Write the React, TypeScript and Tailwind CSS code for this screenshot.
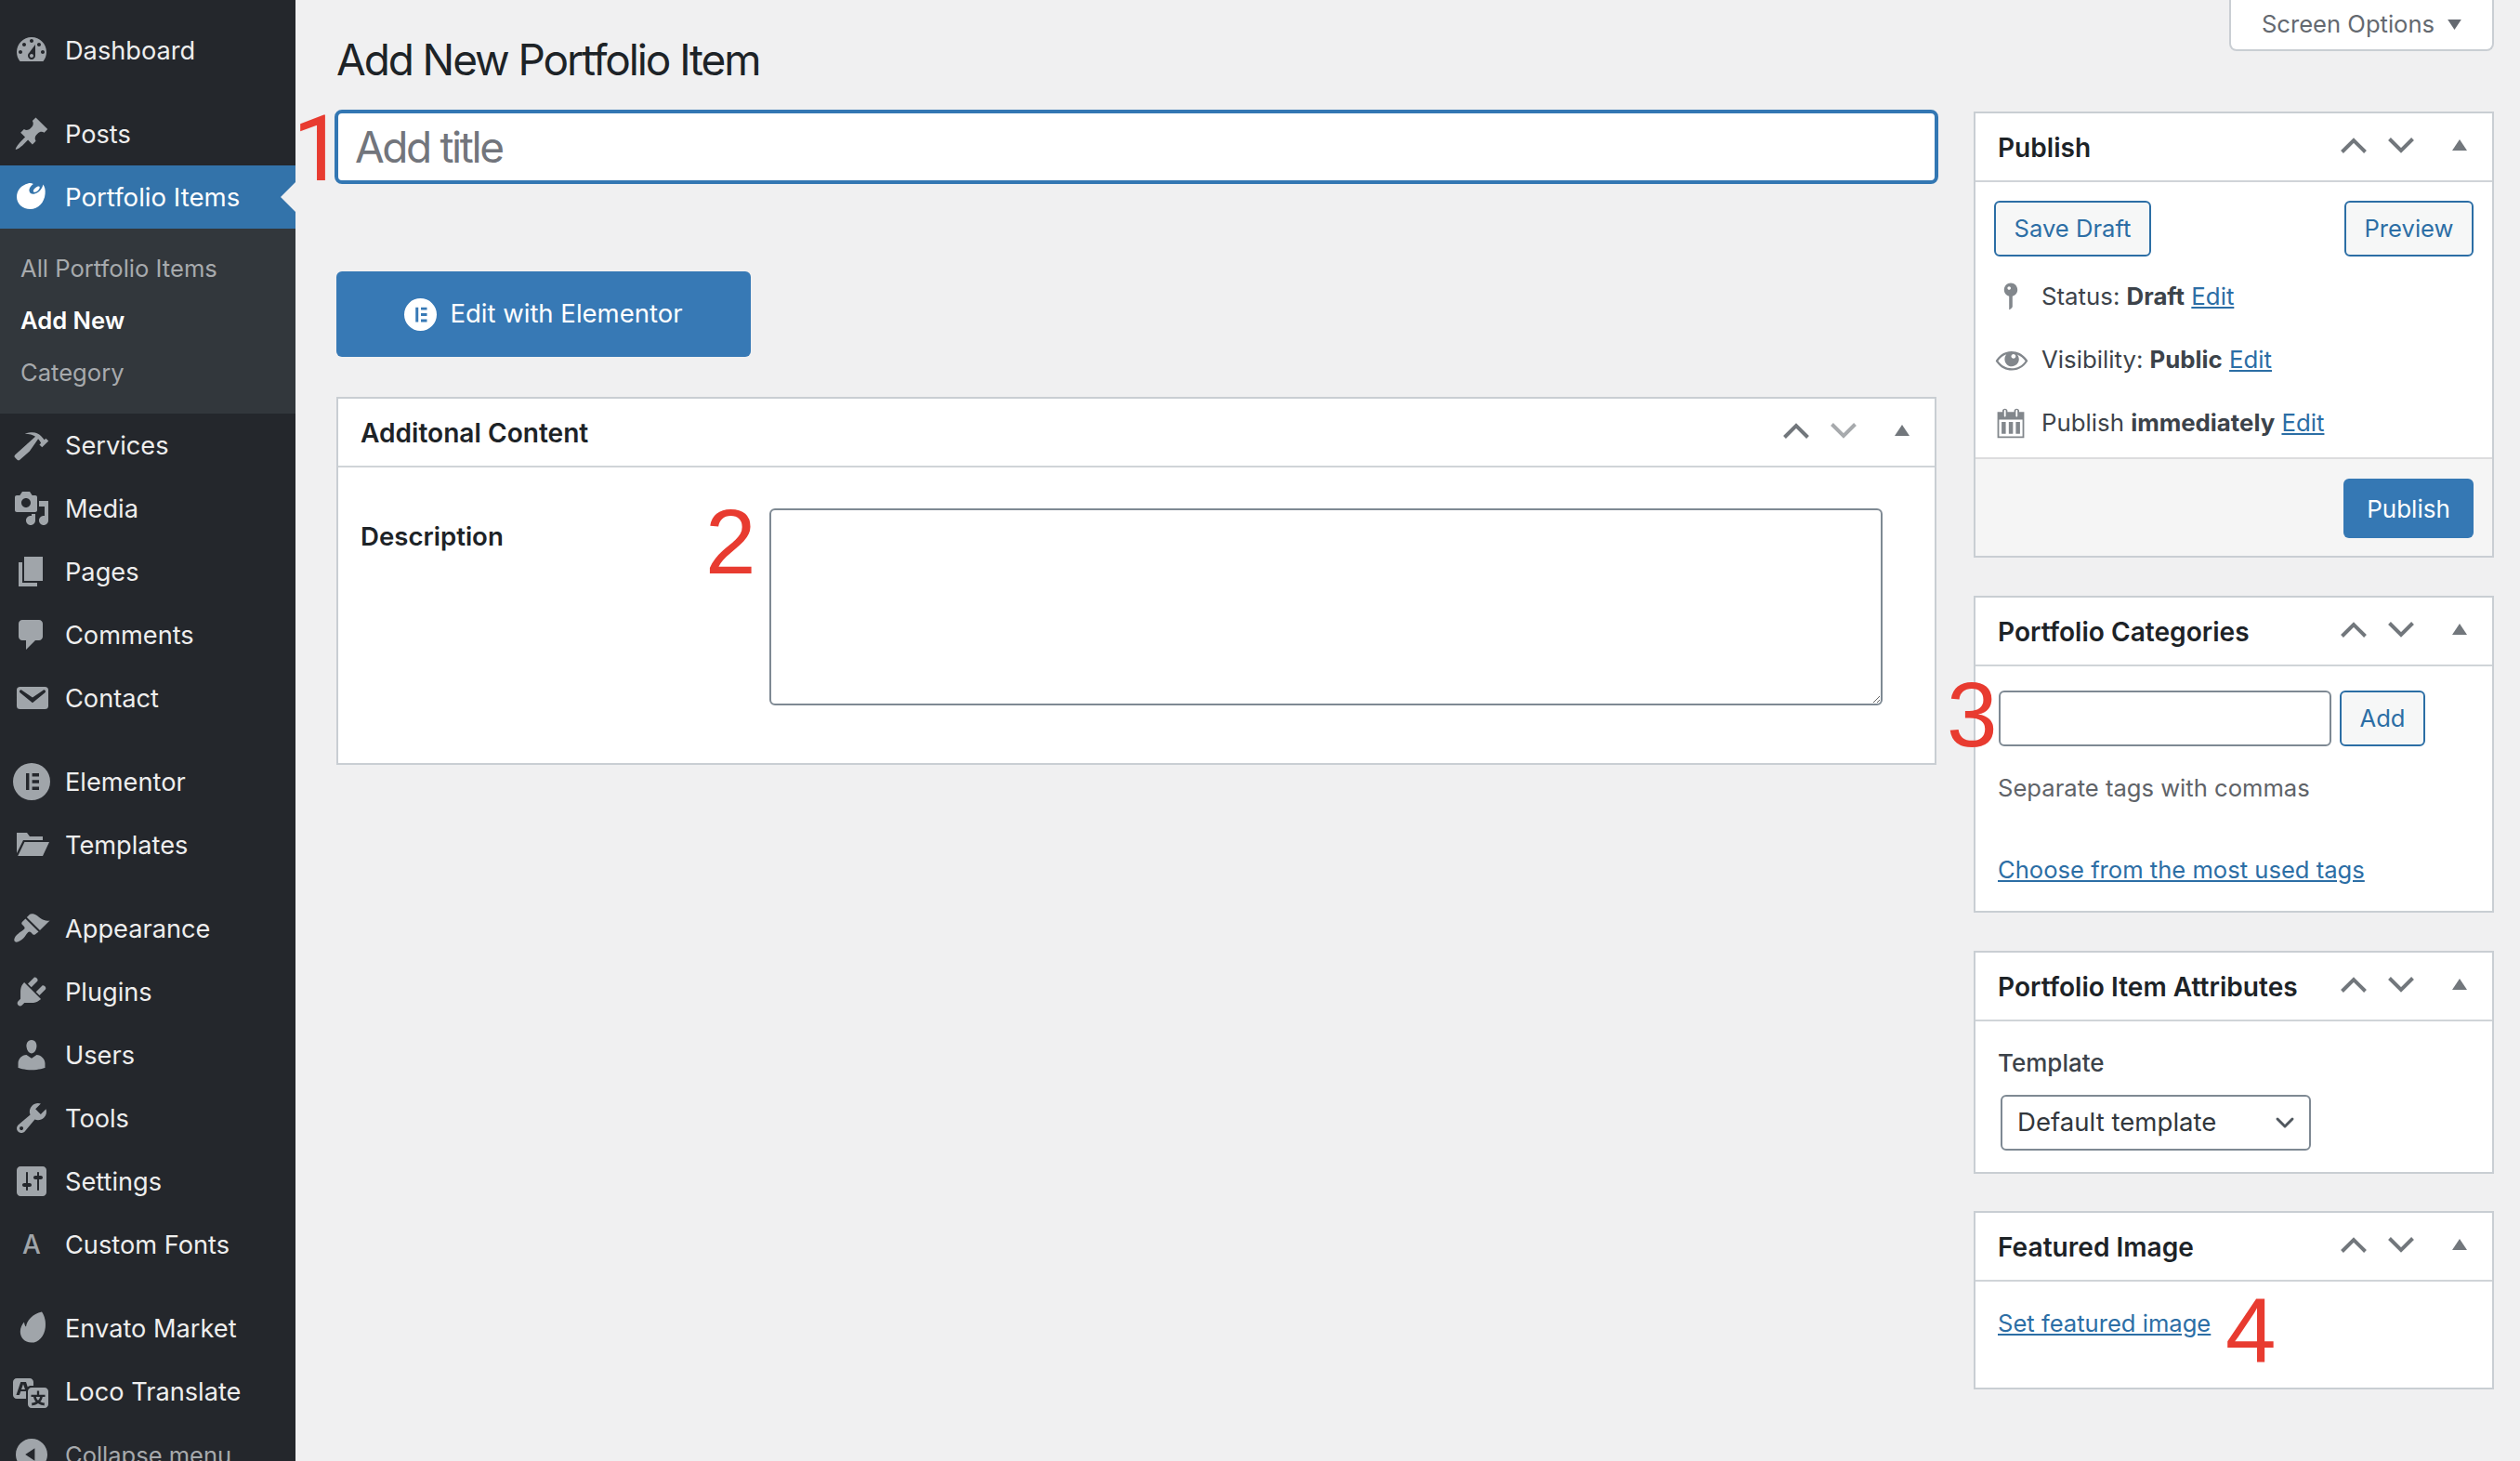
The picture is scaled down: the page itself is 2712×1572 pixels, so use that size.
import { ChevronDown } from "lucide-react";
import type { ReactNode } from "react";

const ELEMENTOR =
  "M10 0a10 10 0 1 0 0 20 10 10 0 0 0 0-20zM7 5.5h1.7v9H7zM10.3 5.5H14v1.7h-3.7zM10.3 9.15H14v1.7h-3.7zM10.3 12.8H14v1.7h-3.7z";

const ICONS: Record<string, string> = {
  dashboard:
    "M3.76 16h12.48c1.1-1.37 1.76-3.11 1.76-5 0-4.42-3.58-8-8-8s-8 3.58-8 8c0 1.89.66 3.63 1.76 5zM10 4c.55 0 1 .45 1 1s-.45 1-1 1-1-.45-1-1 .45-1 1-1zM6 6c.55 0 1 .45 1 1s-.45 1-1 1-1-.45-1-1 .45-1 1-1zm8 0c.55 0 1 .45 1 1s-.45 1-1 1-1-.45-1-1 .45-1 1-1zm-5.37 5.55L12 7v6c0 1.1-.9 2-2 2s-2-.9-2-2c0-.57.24-1.08.63-1.45zM4 10c.55 0 1 .45 1 1s-.45 1-1 1-1-.45-1-1 .45-1 1-1zm12 0c.55 0 1 .45 1 1s-.45 1-1 1-1-.45-1-1 .45-1 1-1zm-5 3c0-.55-.45-1-1-1s-1 .45-1 1 .45 1 1 1 1-.45 1-1z",
  pin: "M10.44 3.02l1.82-1.82 6.36 6.35-1.83 1.82c-1.05-.68-2.48-.57-3.41.36l-.75.75c-.92.93-1.04 2.35-.35 3.41l-1.83 1.82-2.41-2.41-2.8 2.79c-.42.42-3.38 2.71-3.8 2.29s1.86-3.39 2.28-3.81l2.79-2.79L4.1 9.36l1.83-1.82c1.05.69 2.48.57 3.4-.36l.75-.75c.93-.92 1.05-2.35.36-3.41z",
  palette:
    "M9 3.2c1.3-.3 2.2-.1 2.9.3-1.3 1-2.2 2.2-2.2 3.4 0 1.4 1.3 2.3 2.9 1.9 2.2-.5 4.1-2.5 4.6-5 .9 1.2 1.3 2.9 1.1 4.9-.4 4.700-3.700 8.300-8 8.300-4.200 0-7.300-2.700-7.300-6.600 0-3.700 2.600-6.400 6-7.200zM13 5.600c.9-.8 2-1 2.300-.6.3.5-.2 1.500-1.100 2.200-.9.700-1.900.9-2.200.4-.3-.4.1-1.300 1-2z",
  hammer:
    "M17.7 6.32l1.41 1.42-3.47 3.41-1.42-1.42.84-.82c-.32-.76-.81-1.57-1.51-2.31l-4.61 6.59-5.26 4.7c-.39.39-1.02.39-1.42 0l-1.2-1.21c-.39-.39-.39-1.02 0-1.41l10.97-9.92c-1.37-.86-3.21-1.46-5.67-1.48 2.7-.82 4.95-.93 6.58-.3 1.7.66 2.82 2.2 3.91 3.58z",
  media:
    "M13 11V4c0-.55-.45-1-1-1h-1.67L9 1H5L3.67 3H2c-.55 0-1 .45-1 1v7c0 .55.45 1 1 1h10c.55 0 1-.45 1-1zM7 4.5c1.38 0 2.5 1.12 2.5 2.5S8.38 9.5 7 9.5 4.5 8.38 4.5 7 5.62 4.5 7 4.500zM14 6h5v10.500c0 1.380-1.120 2.500-2.500 2.500S14 17.880 14 16.500s1.120-2.500 2.500-2.500c.17 0 .34.02.5.05V9h-3V6zm-4 8.050V13h2v3.500c0 1.380-1.120 2.500-2.500 2.500S7 17.880 7 16.500 8.120 14 9.500 14c.17 0 .34.02.5.05z",
  pages: "M6 15V2h10v13H6zm-1 1h8v2H3V5h2v11z",
  comments:
    "M5 2h9c1.1 0 2 .9 2 2v7c0 1.1-.9 2-2 2h-2l-5 5v-5H5c-1.1 0-2-.9-2-2V4c0-1.1.9-2 2-2z",
  email:
    "M3.87 4h13.25C18.37 4 19 4.59 19 5.79v8.42c0 1.19-.63 1.79-1.88 1.79H3.87c-1.25 0-1.88-.6-1.88-1.79V5.79c0-1.2.63-1.79 1.88-1.79zm6.62 8.6l6.74-5.53c.24-.2.43-.66.13-1.07-.29-.41-.82-.42-1.17-.17l-5.7 3.86L4.8 5.83c-.35-.25-.88-.24-1.17.17-.3.41-.11.87.13 1.07z",
  elementor: ELEMENTOR,
  folder:
    "M2 3.500h5.500L9 5.500h7v2H5.500L2 14.500zM6.200 8.500H19.500L16 16H2.600z",
  brush:
    "M14.48 11.06L7.41 3.99l1.5-1.5c.5-.56 2.3-.47 3.51.32 1.21.8 1.43 1.28 2.91 2.1 1.18.64 2.45 1.26 4.45.85zm-.71.71L6.7 4.7 4.93 6.47c-.39.39-.39 1.02 0 1.41l1.06 1.06c.39.39.39 1.03 0 1.42-.6.6-1.43 1.11-2.21 1.69-.35.26-.7.53-1.01.84C1.43 13.73 0 16.03 1 17s3.27-.43 4.61-1.77c.31-.31.58-.66.84-1.01.58-.78 1.09-1.61 1.69-2.21.39-.39 1.02-.39 1.41 0l1.06 1.06c.39.39 1.02.39 1.41 0z",
  plugins:
    "M13.11 4.36L9.87 7.6 8 5.73l3.24-3.24c.35-.34 1.05-.2 1.56.32.52.51.66 1.21.31 1.55zm-8 1.77l.91-1.12 9.01 9.01-1.19.84c-.71.71-2.63 1.16-3.82 1.16H6.14L4.9 17.26c-.59.59-1.54.59-2.12 0-.59-.58-.59-1.53 0-2.12l1.24-1.24v-3.88c0-1.13.4-3.19 1.09-3.89zm7.26 3.97l3.24-3.24c.34-.35 1.04-.21 1.55.31.52.51.66 1.21.31 1.55l-3.24 3.25z",
  users:
    "M10 9.25c-2.27 0-2.73-3.44-2.73-3.44C7 4.02 7.82 2 9.97 2c2.16 0 2.98 2.02 2.71 3.81 0 0-.41 3.44-2.68 3.44zm0 2.57L12.72 10c2.39 0 4.52 2.33 4.52 4.53v2.49s-3.65 1.13-7.24 1.13c-3.65 0-7.24-1.13-7.24-1.13v-2.49c0-2.25 1.94-4.48 4.47-4.48z",
  tools:
    "M16.68 9.77c-1.34 1.34-3.3 1.67-4.95.99l-5.41 6.52c-.99.99-2.59.99-3.58 0s-.99-2.59 0-3.57l6.52-5.42c-.68-1.65-.35-3.61.99-4.95 1.28-1.28 3.12-1.62 4.72-1.06l-2.89 2.89 2.82 2.82 2.86-2.87c.53 1.58.18 3.39-1.08 4.65zM3.81 16.21c.4.39 1.04.39 1.43 0 .4-.4.4-1.04 0-1.43-.39-.4-1.03-.4-1.43 0-.39.39-.39 1.03 0 1.43z",
  settings:
    "M18 16V4c0-1.1-.9-2-2-2H4c-1.1 0-2 .9-2 2v12c0 1.1.9 2 2 2h12c1.1 0 2-.9 2-2zM8 11h1c.55 0 1 .45 1 1s-.45 1-1 1H8v1.500c0 .28-.22.5-.5.5s-.5-.22-.5-.5V13H6c-.55 0-1-.45-1-1s.45-1 1-1h1V5.500c0-.28.22-.5.5-.5s.5.22.5.5V11zm5-2h-1c-.55 0-1-.45-1-1s.45-1 1-1h1V5.500c0-.28.22-.5.5-.5s.5.22.5.5V7h1c.55 0 1 .45 1 1s-.45 1-1 1h-1v5.500c0 .28-.22.5-.5.5s-.5-.22-.5-.5V9z",
  envato:
    "M15.500 1.200c1.600 2.300 2.300 5.400 1.900 8.500-.6 4.700-3.500 8.100-7.500 8.100-3.700 0-6-2.800-6-5.900 0-2.200 1-4 2.100-5.200.1 1.100.4 2 1 2.600C7.300 6 10.500 2.200 15.500 1.200z",
  translation:
    "M11 7H9.49c-.63 0-1.25.3-1.59.7L7 5H4.13l-2.39 7h1.69l.74-2H7v4H2c-1.1 0-2-.9-2-2V5c0-1.1.9-2 2-2h7c1.1 0 2 .9 2 2v2zM6.510 9H4.490l1-2.930zM10 8h7c1.100 0 2 .9 2 2v7c0 1.100-.9 2-2 2h-7c-1.100 0-2-.9-2-2v-7c0-1.100.9-2 2-2zm7.250 5v-1.080h-3.170V9.750h-1.160v2.170H9.750V13h1.280c.11.85.56 1.850 1.280 2.620-.87.36-1.890.62-2.310.62-.01.02.22.97.2 1.460.84 0 2.210-.5 3.280-1.150 1.090.65 2.480 1.150 3.340 1.150-.02-.49.2-1.440.2-1.460-.43 0-1.490-.26-2.380-.62.72-.77 1.140-1.770 1.250-2.620h1.360zm-3.810 1.930c-.5-.46-.85-1.130-1.010-1.930h2.090c-.17.8-.51 1.470-1 1.930l-.04.03s-.03-.02-.04-.03z",
  collapse:
    "M10 20c5.520 0 10-4.480 10-10S15.520 0 10 0 0 4.480 0 10s4.480 10 10 10zm2-14v8l-6-4z",
  status:
    "M14 6c0 1.860-1.280 3.410-3 3.860V16c0 1-2 2-2 2V9.860c-1.720-.45-3-2-3-3.860 0-2.210 1.790-4 4-4s4 1.790 4 4zM8 5c0 .55.45 1 1 1s1-.45 1-1-.45-1-1-1-1 .45-1 1z",
  eye: "M18.300 9.500C15 4.900 8.500 3.800 3.900 7.200c-1.200.9-2.200 2.100-3 3.400.2.4.5.8.8 1.200 3.300 4.600 9.600 5.600 14.200 2.400.9-.7 1.700-1.400 2.400-2.400.3-.4.5-.8.8-1.200-.3-.4-.5-.8-.8-1.100zm-8.200-2.300c.5-.5 1.300-.5 1.800 0s.5 1.300 0 1.800-1.300.5-1.800 0-.5-1.300 0-1.800zm-.1 7.700c-3.100 0-6-1.600-7.700-4.200C3.500 9 5.100 7.800 7 7c-.7.8-1 1.700-1 2.700 0 2.200 1.700 4.100 4 4.100 2.200 0 4.100-1.700 4.100-4 0-1-.4-2-1.100-2.700 1.900.8 3.500 2 4.700 3.700-1.700 2.600-4.600 4.100-7.700 4.100z",
  calendar:
    "M2 3.500h3V2.800c0-.8.6-1.300 1.500-1.300S8 2 8 2.800v.7h4v-.7c0-.8.6-1.300 1.500-1.300s1.500.5 1.500 1.300v.7h3V19H2zM6 2.800v3c0 .7 1 .7 1 0v-3c0-.7-1-.7-1 0zM13 2.800v3c0 .7 1 .7 1 0v-3c0-.7-1-.7-1 0zM3 8v10h14V8zM4.500 9.500h2.500v7H4.500zM8.800 9.500h2.500v7H8.800zM13 9.500h2.500v7H13z",
};

function Dash({ name, className }: { name: string; className?: string }) {
  return (
    <svg viewBox="0 0 20 20" className={className} fill="currentColor">
      <path fillRule="evenodd" d={ICONS[name]} />
    </svg>
  );
}

function MenuItem({ icon, label, dim }: { icon: ReactNode; label: string; dim?: boolean }) {
  return (
    <div className={`flex h-[68px] items-center gap-[16px] pl-[14px] ${dim ? "text-[25.5px] text-[#a7aaad]" : "text-[27.2px] text-[#eeeeee]"}`}>
      <span className="flex h-[40px] w-[40px] shrink-0 items-center justify-center text-[#a0a5aa]">{icon}</span>
      <span className="pt-[2px]">{label}</span>
    </div>
  );
}

function Item({ name, label }: { name: string; label: string }) {
  return <MenuItem icon={<Dash name={name} className="h-[40px] w-[40px]" />} label={label} />;
}

function Sidebar() {
  return (
    <aside className="h-full w-[318px] shrink-0 overflow-hidden bg-[#24272c] pt-[20px]">
      <Item name="dashboard" label="Dashboard" />
      <div className="mt-[22px]">
        <Item name="pin" label="Posts" />
      </div>
      <div className="relative flex h-[68px] items-center gap-[16px] bg-[#3373aa] pl-[14px] text-[27.6px] text-white">
        <Dash name="palette" className="h-[40px] w-[40px] shrink-0 -translate-x-[2px] -translate-y-[1px]" />
        <span className="pt-[2px]">Portfolio Items</span>
        <span className="absolute right-0 top-[18px] h-0 w-0 border-y-[16px] border-r-[16px] border-y-transparent border-r-[#f0f0f1]" />
      </div>
      <div className="bg-[#32373c] pb-[16px] pt-[15px] text-[25.6px] leading-[56px] text-[#a7aaad]">
        <div className="pl-[22px]">All Portfolio Items</div>
        <div className="pl-[22px] font-semibold text-white">Add New</div>
        <div className="pl-[22px]">Category</div>
      </div>
      <Item name="hammer" label="Services" />
      <Item name="media" label="Media" />
      <Item name="pages" label="Pages" />
      <Item name="comments" label="Comments" />
      <Item name="email" label="Contact" />
      <div className="mt-[22px]">
        <Item name="elementor" label="Elementor" />
        <Item name="folder" label="Templates" />
      </div>
      <div className="mt-[22px]">
        <Item name="brush" label="Appearance" />
        <Item name="plugins" label="Plugins" />
        <Item name="users" label="Users" />
        <Item name="tools" label="Tools" />
        <Item name="settings" label="Settings" />
        <MenuItem icon={<span className="text-[28px] font-medium">A</span>} label="Custom Fonts" />
      </div>
      <div className="mt-[22px]">
        <Item name="envato" label="Envato Market" />
        <Item name="translation" label="Loco Translate" />
        <MenuItem icon={<Dash name="collapse" className="h-[34px] w-[34px]" />} label="Collapse menu" dim />
      </div>
    </aside>
  );
}

function SortControls({ downDim }: { downDim?: boolean }) {
  return (
    <div className="flex items-center pb-[4px]">
      <svg viewBox="0 0 28 17" className="h-[17px] w-[28px]" fill="none" stroke="#72777c" strokeWidth="4">
        <path d="M1.500 15.500 14 3l12.500 12.500" />
      </svg>
      <svg viewBox="0 0 28 17" className="ml-[23px] h-[17px] w-[28px]" fill="none" stroke={downDim ? "#a7aaad" : "#72777c"} strokeWidth="4">
        <path d="M1.500 1.500 14 14 26.500 1.500" />
      </svg>
      <svg viewBox="0 0 16 12" className="ml-[41px] mr-[27px] h-[12px] w-[16px]" fill="#72777c">
        <path d="M8 0l8 12H0z" />
      </svg>
    </div>
  );
}

function MetaBox({ title, downDim, children }: { title: string; downDim?: boolean; children: ReactNode }) {
  return (
    <section className="border-2 border-[#c9ced3] bg-white">
      <div className="flex h-[74px] items-center justify-between border-b-2 border-[#d0d4d8] pl-[24px]">
        <h2 className="pt-[2px] text-[28.1px] font-semibold text-[#1d2327]">{title}</h2>
        <SortControls downDim={downDim} />
      </div>
      {children}
    </section>
  );
}

function OutlineButton({ label, className }: { label: string; className: string }) {
  return (
    <button type="button" className={`h-[60px] rounded-[6px] border-2 border-[#2c6ea5] bg-[#f6f7f7] text-[25.6px] text-[#2c6ea5] ${className}`}>
      {label}
    </button>
  );
}

function EditLink() {
  return <a className="text-[#2c6ea5] underline">Edit</a>;
}

function StatusRow({ name, iconClass, children }: { name: string; iconClass: string; children: ReactNode }) {
  return (
    <div className="flex h-[68px] items-center pl-[20px] text-[25.8px] text-[#3c434a]">
      <span className="flex w-[51px] shrink-0 items-center justify-start text-[#82878c]">
        <Dash name={name} className={iconClass} />
      </span>
      <span>{children}</span>
    </div>
  );
}

function Digit({ value, className }: { value: string; className: string }) {
  return <span className={`absolute text-[98px] leading-none text-[#e83b30] ${className}`}>{value}</span>;
}

export default function App() {
  return (
    <div className="relative flex h-[1572px] w-[2712px] overflow-hidden bg-[#f0f0f1] font-['Inter',sans-serif]">
      <Sidebar />

      <main className="ml-[44px] w-[1724px] shrink-0">
        <h1 className="pb-[26px] pt-[36px] text-[46px] font-normal leading-[56px] tracking-[-2.1px] text-[#1d2327]">Add New Portfolio Item</h1>
        <input
          placeholder="Add title"
          className="-ml-[2px] block h-[80px] w-[1726px] rounded-[8px] border-[4px] border-[#3377b3] bg-white px-[18px] text-[46px] tracking-[-2.4px] outline-none placeholder:text-[#72757c]"
        />
        <button type="button" className="mt-[94px] flex h-[92px] w-[446px] items-center justify-center gap-[14px] rounded-[6px] bg-[#3779b5] text-[27.5px] text-white">
          <svg viewBox="0 0 20 20" className="h-[35px] w-[35px]" fill="currentColor">
            <path fillRule="evenodd" d={ELEMENTOR} />
          </svg>
          Edit with Elementor
        </button>
        <div className="mt-[43px] w-[1722px]">
          <MetaBox title="Additonal Content" downDim>
            <div className="flex pb-[62px] pl-[24px] pt-[44px]">
              <label className="mt-[10px] w-[440px] text-[27.6px] font-semibold leading-[40px] text-[#1d2327]">Description</label>
              <textarea className="block h-[212px] w-[1198px] rounded-[6px] border-2 border-[#7e8993] bg-white outline-none" />
            </div>
          </MetaBox>
        </div>
      </main>

      <div className="ml-[38px] w-[560px] shrink-0">
        <div className="flex h-[120px] items-start justify-end">
          <button type="button" className="flex h-[55px] w-[285px] items-center justify-center gap-[14px] rounded-b-[8px] border-2 border-t-0 border-[#c9ced3] bg-white text-[25.6px] text-[#646970]">
            Screen Options
            <svg viewBox="0 0 16 12" className="h-[11px] w-[15px]" fill="#646970">
              <path d="M8 12l8-12H0z" />
            </svg>
          </button>
        </div>

        <MetaBox title="Publish">
          <div className="flex justify-between px-[20px] pt-[20px]">
            <OutlineButton label="Save Draft" className="w-[169px]" />
            <OutlineButton label="Preview" className="w-[139px]" />
          </div>
          <div className="mt-[9px] h-[138px]">
            <StatusRow name="status" iconClass="h-[36px] w-[36px]">
              Status: <b className="font-bold">Draft</b> <EditLink />
            </StatusRow>
            <StatusRow name="eye" iconClass="h-[38px] w-[38px]">
              Visibility: <b className="font-bold">Public</b> <EditLink />
            </StatusRow>
            <StatusRow name="calendar" iconClass="h-[36px] w-[36px]">
              Publish <b className="font-bold">immediately</b> <EditLink />
            </StatusRow>
          </div>
          <div className="mt-[69px] flex h-[106px] justify-end border-t-2 border-[#dcdcde] bg-[#f5f5f5] pr-[20px] pt-[21px]">
            <button type="button" className="h-[64px] w-[140px] rounded-[6px] bg-[#3578b4] text-[26px] text-white">Publish</button>
          </div>
        </MetaBox>

        <div className="mt-[41px]">
          <MetaBox title="Portfolio Categories">
            <div className="h-[263px] pl-[24px] pt-[26px] text-[25.6px] leading-[40px]">
              <div className="flex gap-[9px]">
                <input className="ml-[1px] h-[60px] w-[358px] rounded-[6px] border-2 border-[#7e8993] bg-white outline-none" />
                <OutlineButton label="Add" className="w-[92px]" />
              </div>
              <p className="mt-[25px] text-[#5f6368]">Separate tags with commas</p>
              <p className="mt-[48px]">
                <a className="text-[#2c6ea5] underline">Choose from the most used tags</a>
              </p>
            </div>
          </MetaBox>
        </div>

        <div className="mt-[41px]">
          <MetaBox title="Portfolio Item Attributes">
            <div className="h-[162px] pl-[24px] pt-[25px]">
              <div className="text-[26px] font-medium leading-[40px] text-[#3c434a]">Template</div>
              <div className="relative ml-[3px] mt-[14px] w-[334px]">
                <select className="block h-[60px] w-full appearance-none rounded-[6px] border-2 border-[#7e8993] bg-white pl-[16px] text-[27.6px] text-[#32373c] outline-none">
                  <option>Default template</option>
                </select>
                <ChevronDown className="pointer-events-none absolute right-[12px] top-[14px] h-[32px] w-[32px] text-[#50575e]" strokeWidth={2.2} />
              </div>
            </div>
          </MetaBox>
        </div>

        <div className="mt-[40px]">
          <MetaBox title="Featured Image">
            <div className="h-[114px] pl-[24px] pt-[25px] text-[25.6px] leading-[40px]">
              <a className="text-[#2c6ea5] underline">Set featured image</a>
            </div>
          </MetaBox>
        </div>
      </div>

      <Digit value="1" className="left-[315px] top-[112px] font-['Roboto',sans-serif]" />
      <Digit value="2" className="left-[759px] top-[534px] font-['Liberation_Sans',sans-serif]" />
      <Digit value="3" className="left-[2095px] top-[720px] font-['Liberation_Sans',sans-serif]" />
      <Digit value="4" className="left-[2395px] top-[1382px] font-['Liberation_Sans',sans-serif]" />
    </div>
  );
}
